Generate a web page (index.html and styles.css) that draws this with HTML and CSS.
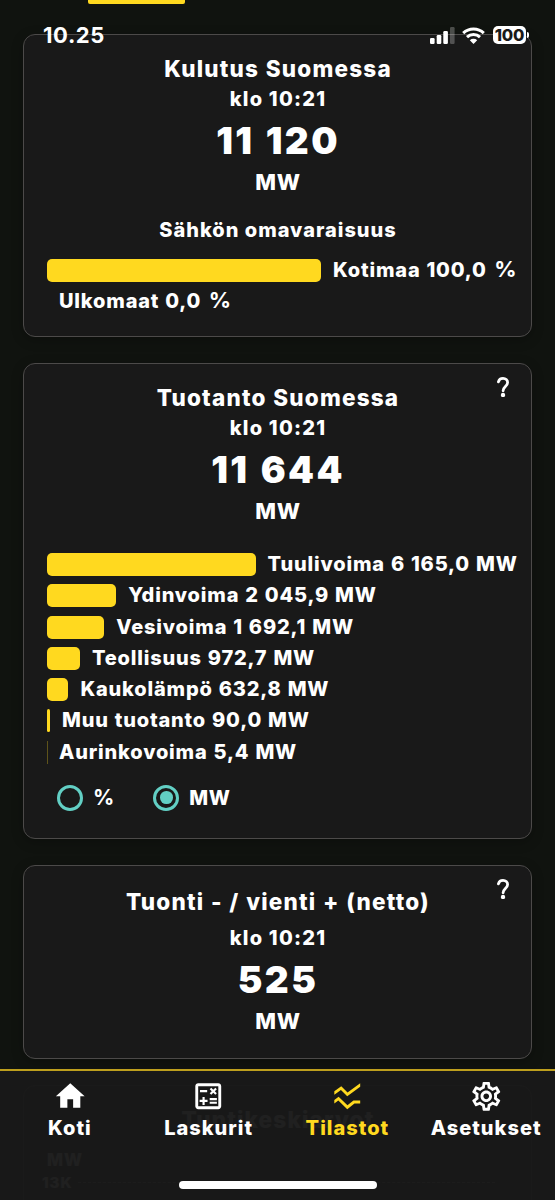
FILE: index.html
```html
<!DOCTYPE html>
<html lang="fi">
<head>
<meta charset="utf-8">
<title>Tilastot</title>
<link rel="stylesheet" href="styles.css">
</head>
<body>
<div class="screen">
  <div class="tab-indicator"></div>
  <header class="status">
    <span class="status-time">10.25</span>
    <div class="status-icons">
      <svg class="signal" viewBox="0 0 25 17"><rect x="0" y="11" width="4.6" height="6" rx="1.2"/><rect x="6.7" y="8" width="4.6" height="9" rx="1.2"/><rect x="13.3" y="4" width="4.6" height="13" rx="1.2"/><rect x="20" y="0" width="4.6" height="17" rx="1.2" opacity=".25"/></svg>
      <svg class="wifi" viewBox="0 0 23 17"><path d="M1.2 6.2a14.8 14.8 0 0 1 20.6 0M5 10.2a9.4 9.4 0 0 1 13 0" fill="none" stroke="#fff" stroke-width="3"/><path d="M11.5 17l-3.7-3.8a5.4 5.4 0 0 1 7.4 0z"/></svg>
      <div class="battery"><span class="battery-level">100</span></div>
    </div>
  </header>

  <main class="cards">
    <section class="card card-use">
      <h2 class="title">Kulutus Suomessa</h2>
      <p class="time">klo 10:21</p>
      <p class="value">11 120</p>
      <p class="unit">MW</p>
      <h3 class="subtitle">Sähkön omavaraisuus</h3>
      <div class="bars">
        <div class="row"><span class="bar" style="width:274px"></span><span class="label">Kotimaa 100,0 <span class="pct">%</span></span></div>
        <div class="row"><span class="bar" style="width:0"></span><span class="label">Ulkomaat 0,0 <span class="pct">%</span></span></div>
      </div>
    </section>

    <section class="card card-prod">
      <svg class="help" viewBox="0 0 12 20"><path d="M1.4 4.8C2 2.700 3.700 1.400 6 1.400c2.700 0 4.600 1.700 4.600 4.100 0 3.900-4.500 4.200-4.500 8.300" fill="none" stroke="#fff" stroke-width="2.800" stroke-linecap="round"/><circle cx="6" cy="18" r="2.200"/></svg>
      <h2 class="title">Tuotanto Suomessa</h2>
      <p class="time">klo 10:21</p>
      <p class="value">11 644</p>
      <p class="unit">MW</p>
      <div class="bars">
        <div class="row"><span class="bar" style="width:208.600px"></span><span class="label">Tuulivoima 6 165,0 MW</span></div>
        <div class="row"><span class="bar" style="width:69.200px"></span><span class="label">Ydinvoima 2 045,9 MW</span></div>
        <div class="row"><span class="bar" style="width:57.300px"></span><span class="label">Vesivoima 1 692,1 MW</span></div>
        <div class="row"><span class="bar" style="width:32.900px"></span><span class="label">Teollisuus 972,7 MW</span></div>
        <div class="row"><span class="bar" style="width:21.400px"></span><span class="label">Kaukolämpö 632,8 MW</span></div>
        <div class="row"><span class="bar" style="width:3px"></span><span class="label">Muu tuotanto 90,0 MW</span></div>
        <div class="row"><span class="bar bar-hair" style="width:1px"></span><span class="label">Aurinkovoima 5,4 MW</span></div>
      </div>
      <div class="radios">
        <span class="radio"><i class="ring"></i><span class="pct">%</span></span>
        <span class="radio"><i class="ring ring-on"></i>MW</span>
      </div>
    </section>

    <section class="card card-net">
      <svg class="help" viewBox="0 0 12 20"><path d="M1.4 4.8C2 2.700 3.700 1.400 6 1.400c2.700 0 4.600 1.700 4.600 4.100 0 3.900-4.500 4.200-4.500 8.300" fill="none" stroke="#fff" stroke-width="2.800" stroke-linecap="round"/><circle cx="6" cy="18" r="2.200"/></svg>
      <h2 class="title">Tuonti - / vienti + (netto)</h2>
      <p class="time">klo 10:21</p>
      <p class="value">525</p>
      <p class="unit">MW</p>
    </section>

    <section class="card card-chart">
      <h2 class="title">Tuntikeskiarvot</h2>
      <p class="axis-unit">MW</p>
      <div class="axis-row"><span class="axis-tick">13K</span><span class="axis-line"></span></div>
    </section>
  </main>

  <nav class="nav">
    <a class="nav-item"><svg viewBox="0 0 24 24"><path d="M10 20v-6h4v6h5v-8h3L12 3 2 12h3v8z"/></svg>Koti</a>
    <a class="nav-item"><svg viewBox="0 0 24 24"><path d="M19 3H5c-1.100 0-2 .9-2 2v14c0 1.100.9 2 2 2h14c1.100 0 2-.9 2-2V5c0-1.100-.9-2-2-2zm0 16H5V5h14v14z"/><path d="M6.250 7.720h5v1.500h-5zM13 15.750h5v1.500h-5zM13 13.250h5v1.500h-5zM8 18h1.500v-2h2v-1.500h-2v-2H8v2H6V16h2zM14.090 10.950l1.410-1.410 1.410 1.410 1.060-1.060-1.410-1.420 1.410-1.410L16.910 6 15.500 7.410 14.090 6l-1.060 1.060 1.410 1.410-1.410 1.420z"/></svg>Laskurit</a>
    <a class="nav-item nav-active"><svg viewBox="0 0 24 24"><path d="M21 5.470 12 12 7.620 7.620 3 11V8.520L7.830 5l4.380 4.380L21 3v2.470zM21 15h-4.700l-4.170 3.340L6 12.410l-3 2.130V17l2.800-2 6.200 6 5-4h4v-2z"/></svg>Tilastot</a>
    <a class="nav-item"><svg viewBox="0 0 24 24"><path d="M19.430 12.980c.04-.32.07-.64.07-.98 0-.34-.03-.66-.07-.98l2.110-1.650c.19-.15.24-.42.12-.64l-2-3.460c-.09-.16-.26-.25-.44-.25-.06 0-.12.01-.17.03l-2.490 1c-.52-.4-1.080-.73-1.690-.98l-.38-2.650C14.460 2.180 14.250 2 14 2h-4c-.25 0-.46.18-.49.42l-.38 2.650c-.61.25-1.170.59-1.690.98l-2.490-1c-.06-.02-.12-.03-.18-.03-.17 0-.34.09-.43.25l-2 3.460c-.13.22-.07.49.12.64l2.110 1.650c-.04.32-.07.65-.07.98 0 .33.03.66.07.98l-2.110 1.650c-.19.15-.24.42-.12.64l2 3.460c.09.16.26.25.44.25.06 0 .12-.01.17-.03l2.490-1c.52.4 1.080.73 1.690.98l.38 2.650c.03.24.24.42.49.42h4c.25 0 .46-.18.49-.42l.38-2.650c.61-.25 1.170-.59 1.690-.98l2.490 1c.06.02.12.03.18.03.17 0 .34-.09.43-.25l2-3.460c.12-.22.07-.49-.12-.64l-2.110-1.650zm-1.980-1.710c.04.31.05.52.05.73 0 .21-.02.43-.05.73l-.14 1.130.89.7 1.080.84-.7 1.210-1.270-.51-1.040-.42-.9.68c-.43.32-.84.56-1.250.73l-1.060.43-.16 1.130-.2 1.350h-1.400l-.19-1.350-.16-1.130-1.060-.43c-.43-.18-.83-.41-1.230-.71l-.91-.7-1.060.43-1.270.51-.7-1.210 1.080-.84.89-.7-.14-1.130c-.03-.31-.05-.54-.05-.74s.02-.43.05-.73l.14-1.130-.89-.7-1.080-.84.7-1.210 1.270.51 1.040.42.9-.68c.43-.32.84-.56 1.250-.73l1.060-.43.16-1.130.2-1.350h1.390l.19 1.350.16 1.130 1.060.43c.43.18.83.41 1.230.71l.91.7 1.060-.43 1.270-.51.7 1.210-1.070.85-.89.7.14 1.130zM12 8c-2.210 0-4 1.790-4 4s1.790 4 4 4 4-1.790 4-4-1.790-4-4-4zm0 6c-1.100 0-2-.9-2-2s.9-2 2-2 2 .9 2 2-.9 2-2 2z"/></svg>Asetukset</a>
    <span class="home-bar"></span>
  </nav>
</div>
</body>
</html>
```
FILE: styles.css
```css
* { box-sizing: border-box; }
body { margin: 0; background: #10130f; }
h2, h3, p { margin: 0; font-weight: inherit; font-size: inherit; }
svg { display: block; fill: #fff; }

.screen {
  position: relative;
  height: 1200px;
  overflow: hidden;
  padding: 34px 23px 0;
  background: #10130f;
  color: #fff;
  font-family: Inter, "Liberation Sans", sans-serif;
  font-weight: 850;
}
.tab-indicator {
  position: absolute; top: -2px; left: 88px;
  width: 97px; height: 6px; border-radius: 2px;
  background: #ffd91f;
}

/* status bar */
.status {
  position: absolute; top: 22px; left: 43px; right: 26px;
  z-index: 2;
  display: flex; justify-content: space-between; align-items: center;
  height: 26px;
}
.status-time { font-size: 22px; font-weight: 700; letter-spacing: .6px; }
.status-icons { display: flex; align-items: center; }
.signal { width: 25px; height: 17px; margin-right: 7px; }
.wifi { width: 23px; height: 17px; margin-right: 8px; }
.battery {
  position: relative;
  width: 33px; height: 18px; margin-right: 3px;
  border-radius: 5px; background: #fff;
}
.battery::after {
  content: ""; position: absolute; right: -3px; top: 6px;
  width: 2px; height: 6px; border-radius: 0 2px 2px 0; background: #fff;
}
.battery-level {
  display: block; text-align: center; color: #191919;
  font-size: 16.500px; line-height: 18px; font-weight: 800; letter-spacing: -.2px;
}

/* cards */
.cards { display: flex; flex-direction: column; gap: 26px; }
.card {
  position: relative;
  flex: none;
  border: 1px solid #4c4a49;
  border-radius: 12px;
  background: #191919;
  box-shadow: 0 3px 12px rgba(0, 0, 0, .25);
  padding: 0 11px 0 23px;
}
.card-use { height: 303px; padding-top: 19px; }
.card-prod { height: 476px; padding-top: 19px; }
.card-net { height: 194px; padding-top: 21px; }
.card-chart { height: 400px; padding-top: 19px; }

.title, .time, .value, .unit, .subtitle { text-align: center; margin-left: -22px; margin-right: -11px; white-space: nowrap; }
.title { font-size: 22.500px; line-height: 29px; letter-spacing: 1.200px; word-spacing: .5px; }
.time { font-size: 20px; line-height: 26px; letter-spacing: 1.200px; margin-top: 3px; }
.value { font-size: 37px; line-height: 48px; letter-spacing: 2.400px; word-spacing: 1.500px; font-weight: 900; margin-top: 5px; }
.unit { font-size: 22px; line-height: 28px; letter-spacing: .800px; margin-top: 3px; }
.subtitle { font-size: 20px; line-height: 26px; letter-spacing: 1px; margin-top: 21px; }
.card-net .time { margin-top: 9px; }

.bars { display: flex; flex-direction: column; gap: 8.300px; }
.card-use .bars { margin-top: 16px; }
.card-prod .bars { margin-top: 28px; }
.row { display: flex; align-items: center; gap: 12px; height: 23px; }
.bar { flex: none; height: 23px; border-radius: 5px; background: #ffd91f; }
.bar-hair { opacity: .3; border-radius: 0; margin-right: -1px; }
.label { font-size: 20px; line-height: 23px; letter-spacing: .820px; word-spacing: .800px; white-space: nowrap; }
.pct { font-weight: 700; font-size: 21px; letter-spacing: 0; }
.label .pct { margin-left: 1.500px; font-size: 22px; line-height: 20px; }

.help { position: absolute; right: 22px; top: 13px; width: 12px; height: 20px; }

.radios { display: flex; gap: 39px; margin: 21px 0 0 10px; }
.radio { display: flex; align-items: center; gap: 10px; height: 26px; font-size: 20px; letter-spacing: .500px; }
.ring {
  display: flex; align-items: center; justify-content: center;
  width: 26px; height: 26px; border: 3px solid #62cfc4; border-radius: 50%;
}
.ring-on::after { content: ""; width: 12.600px; height: 12.600px; border-radius: 50%; background: #62cfc4; }

/* chart card */
.axis-unit { font-size: 17px; line-height: 22px; letter-spacing: 1px; margin-top: 15px; }
.axis-row { display: flex; align-items: center; margin-left: -5px; height: 22px; }
.axis-tick { width: 36px; font-size: 15px; letter-spacing: 1px; }
.axis-line { flex: 1; margin-right: 25px; border-top: 1px dashed #888; }

/* bottom navigation */
.nav {
  position: absolute; left: 0; right: 0; bottom: 0; z-index: 1;
  display: grid; grid-template-columns: repeat(4, 1fr); align-items: start;
  height: 131px; padding-top: 8px;
  border-top: 2px solid #bd9f1d;
  background: rgba(25, 25, 25, .97);
}
.nav-item {
  display: flex; flex-direction: column; align-items: center;
  padding-left: 1px;
  font-size: 20px; line-height: 26px; letter-spacing: 1px;
}
.nav-item svg { width: 34.500px; height: 34.500px; margin-bottom: 1.500px; }
.nav-active { color: #ffd91f; }
.nav-active svg { fill: #ffd91f; }
.home-bar {
  position: absolute; left: 179px; bottom: 11px;
  width: 198px; height: 8px; border-radius: 4px; background: #fff;
}
```
